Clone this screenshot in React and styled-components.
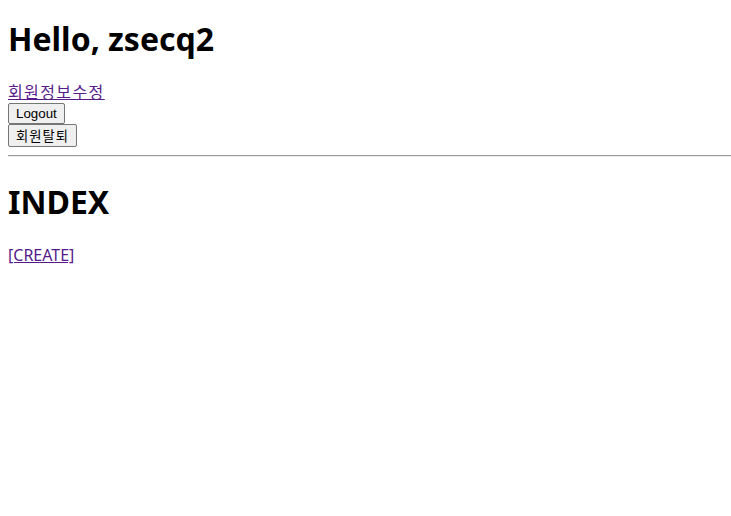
import styled, { createGlobalStyle } from 'styled-components';

const GlobalStyle = createGlobalStyle`
  body {
    margin: 8px 0 8px 8px;
    background: #fff;
    color: #000;
    font-family: "Noto Sans", "Noto Sans CJK KR", sans-serif;
    font-size: 16px;
  }
`;

const Title = styled.h1`
  margin: 12px 0 24px;
  font-size: 32px;
  font-weight: 700;
  line-height: 37px;
`;

const Nav = styled.div`
  display: flex;
  flex-direction: column;
  align-items: flex-start;
`;

const TextLink = styled.a`
  color: #551a8b;
  text-decoration: underline;
  font-size: 16px;
  line-height: 22px;
  letter-spacing: ${(p) => (p.$hangul ? '1.4px' : '0')};
`;

const Button = styled.button`
  box-sizing: border-box;
  height: ${(p) => (p.$hangul ? '23px' : '21px')};
  padding: 0 7px;
  font-family: "Liberation Sans", "Noto Sans CJK KR", sans-serif;
  font-size: 13.33px;
  letter-spacing: ${(p) => (p.$hangul ? '1px' : '0')};
  color: #000;
  background: #efefef;
  border: 1px solid #767676;
  border-radius: 2px;
`;

const Rule = styled.hr`
  box-sizing: border-box;
  height: 2px;
  margin: 8px 0 0;
  border: none;
  border-top: 1px solid #9a9a9a;
  border-bottom: 1px solid #eee;
`;

const Section = styled.h2`
  margin: 26px 0 24px;
  font-size: 32px;
  font-weight: 700;
  line-height: 37px;
`;

export default function App() {
  return (
    <>
      <GlobalStyle />
      <Title>Hello, zsecq2</Title>
      <Nav>
        <TextLink href="#edit" $hangul>회원정보수정</TextLink>
        <Button>Logout</Button>
        <Button $hangul>회원탈퇴</Button>
      </Nav>
      <Rule />
      <Section>INDEX</Section>
      <TextLink href="#create">[CREATE]</TextLink>
    </>
  );
}
